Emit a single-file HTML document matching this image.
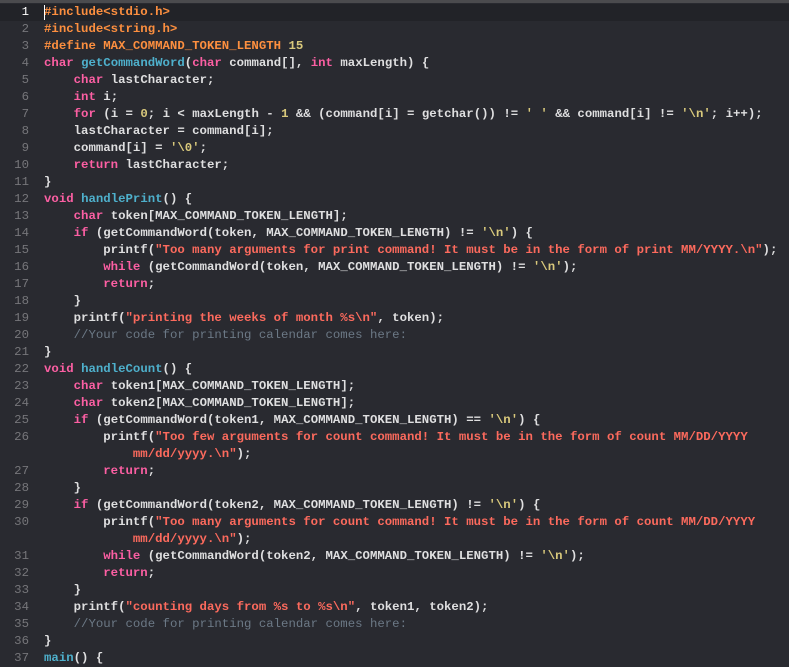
<!DOCTYPE html>
<html><head><meta charset="utf-8"><style>
html,body{margin:0;padding:0;background:#292a30;width:789px;height:657px;overflow:hidden}
.top{position:absolute;left:0;top:0;width:789px;height:3px;background:#4b4b4e}
.hl{position:absolute;left:0;top:4px;width:789px;height:17px;background:#222328}
.cur{position:absolute;left:44px;top:5px;width:1px;height:15px;background:#fff}
.l{position:absolute;left:0;height:17px;line-height:17px;font-family:"Liberation Mono",monospace;font-size:12.35px;font-weight:bold;color:#dfdfe0;white-space:pre}
.n{display:inline-block;width:29px;text-align:right;color:#76767a;font-weight:normal;margin-right:15px}
.n.a{color:#fff}
.p{color:#fd8f3f}.k{color:#fc5fa3}.f{color:#4eb0cc}.s{color:#fc6a5d}.c{color:#d9c97c}.m{color:#6c7986;font-weight:normal}
</style></head><body>
<div class="top"></div><div class="hl"></div>
<div class="l" style="top:4px"><span class="n a">1</span><span class="p">#include&lt;stdio.h&gt;</span></div>
<div class="l" style="top:21px"><span class="n">2</span><span class="p">#include&lt;string.h&gt;</span></div>
<div class="l" style="top:38px"><span class="n">3</span><span class="p">#define MAX_COMMAND_TOKEN_LENGTH </span><span class="c">15</span></div>
<div class="l" style="top:55px"><span class="n">4</span><span class="k">char</span> <span class="f">getCommandWord</span>(<span class="k">char</span> command[], <span class="k">int</span> maxLength) {</div>
<div class="l" style="top:72px"><span class="n">5</span>    <span class="k">char</span> lastCharacter;</div>
<div class="l" style="top:89px"><span class="n">6</span>    <span class="k">int</span> i;</div>
<div class="l" style="top:106px"><span class="n">7</span>    <span class="k">for</span> (i = <span class="c">0</span>; i &lt; maxLength - <span class="c">1</span> &amp;&amp; (command[i] = getchar()) != <span class="c">' '</span> &amp;&amp; command[i] != <span class="c">'\n'</span>; i++);</div>
<div class="l" style="top:123px"><span class="n">8</span>    lastCharacter = command[i];</div>
<div class="l" style="top:140px"><span class="n">9</span>    command[i] = <span class="c">'\0'</span>;</div>
<div class="l" style="top:157px"><span class="n">10</span>    <span class="k">return</span> lastCharacter;</div>
<div class="l" style="top:174px"><span class="n">11</span>}</div>
<div class="l" style="top:191px"><span class="n">12</span><span class="k">void</span> <span class="f">handlePrint</span>() {</div>
<div class="l" style="top:208px"><span class="n">13</span>    <span class="k">char</span> token[MAX_COMMAND_TOKEN_LENGTH];</div>
<div class="l" style="top:225px"><span class="n">14</span>    <span class="k">if</span> (getCommandWord(token, MAX_COMMAND_TOKEN_LENGTH) != <span class="c">'\n'</span>) {</div>
<div class="l" style="top:242px"><span class="n">15</span>        printf(<span class="s">"Too many arguments for print command! It must be in the form of print MM/YYYY.\n"</span>);</div>
<div class="l" style="top:259px"><span class="n">16</span>        <span class="k">while</span> (getCommandWord(token, MAX_COMMAND_TOKEN_LENGTH) != <span class="c">'\n'</span>);</div>
<div class="l" style="top:276px"><span class="n">17</span>        <span class="k">return</span>;</div>
<div class="l" style="top:293px"><span class="n">18</span>    }</div>
<div class="l" style="top:310px"><span class="n">19</span>    printf(<span class="s">"printing the weeks of month %s\n"</span>, token);</div>
<div class="l" style="top:327px"><span class="n">20</span>    <span class="m">//Your code for printing calendar comes here:</span></div>
<div class="l" style="top:344px"><span class="n">21</span>}</div>
<div class="l" style="top:361px"><span class="n">22</span><span class="k">void</span> <span class="f">handleCount</span>() {</div>
<div class="l" style="top:378px"><span class="n">23</span>    <span class="k">char</span> token1[MAX_COMMAND_TOKEN_LENGTH];</div>
<div class="l" style="top:395px"><span class="n">24</span>    <span class="k">char</span> token2[MAX_COMMAND_TOKEN_LENGTH];</div>
<div class="l" style="top:412px"><span class="n">25</span>    <span class="k">if</span> (getCommandWord(token1, MAX_COMMAND_TOKEN_LENGTH) == <span class="c">'\n'</span>) {</div>
<div class="l" style="top:429px"><span class="n">26</span>        printf(<span class="s">"Too few arguments for count command! It must be in the form of count MM/DD/YYYY</span></div>
<div class="l" style="top:446px"><span class="n"></span>            <span class="s">mm/dd/yyyy.\n"</span>);</div>
<div class="l" style="top:463px"><span class="n">27</span>        <span class="k">return</span>;</div>
<div class="l" style="top:480px"><span class="n">28</span>    }</div>
<div class="l" style="top:497px"><span class="n">29</span>    <span class="k">if</span> (getCommandWord(token2, MAX_COMMAND_TOKEN_LENGTH) != <span class="c">'\n'</span>) {</div>
<div class="l" style="top:514px"><span class="n">30</span>        printf(<span class="s">"Too many arguments for count command! It must be in the form of count MM/DD/YYYY</span></div>
<div class="l" style="top:531px"><span class="n"></span>            <span class="s">mm/dd/yyyy.\n"</span>);</div>
<div class="l" style="top:548px"><span class="n">31</span>        <span class="k">while</span> (getCommandWord(token2, MAX_COMMAND_TOKEN_LENGTH) != <span class="c">'\n'</span>);</div>
<div class="l" style="top:565px"><span class="n">32</span>        <span class="k">return</span>;</div>
<div class="l" style="top:582px"><span class="n">33</span>    }</div>
<div class="l" style="top:599px"><span class="n">34</span>    printf(<span class="s">"counting days from %s to %s\n"</span>, token1, token2);</div>
<div class="l" style="top:616px"><span class="n">35</span>    <span class="m">//Your code for printing calendar comes here:</span></div>
<div class="l" style="top:633px"><span class="n">36</span>}</div>
<div class="l" style="top:650px"><span class="n">37</span><span class="f">main</span>() {</div>
<div class="cur"></div>
</body></html>
